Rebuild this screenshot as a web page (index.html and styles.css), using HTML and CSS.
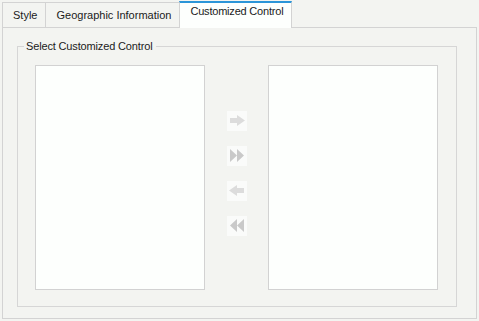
FILE: index.html
```html
<!DOCTYPE html>
<html lang="en">
<head>
  <meta charset="UTF-8" />
  <title>Customized Control</title>
  <link rel="stylesheet" href="styles.css">
</head>
<body>
  <div class="tabs">
    <div class="tab">Style</div>
    <div class="tab">Geographic Information</div>
    <div class="tab active">Customized Control</div>
  </div>

  <div class="panel">
    <fieldset class="group">
      <legend>Select Customized Control</legend>
      <div class="picker">
        <div class="list"></div>

        <div class="moves">
          <button class="move" title="Add">
            <svg viewBox="0 0 20 20" width="20" height="20">
              <rect x="3" y="7" width="7" height="5" fill="#dcdcdc"/>
              <polygon points="10,4 18,9.5 10,15" fill="#dcdcdc"/>
            </svg>
          </button>
          <button class="move" title="Add all">
            <svg viewBox="0 0 20 20" width="20" height="20">
              <polygon points="3,3 10,9.5 3,16" fill="#c9c9c9"/>
              <polygon points="10,3 17,9.5 10,16" fill="#c9c9c9"/>
            </svg>
          </button>
          <button class="move" title="Remove">
            <svg viewBox="0 0 20 20" width="20" height="20">
              <rect x="10" y="7" width="7" height="5" fill="#dcdcdc"/>
              <polygon points="10,4 2,9.5 10,15" fill="#dcdcdc"/>
            </svg>
          </button>
          <button class="move" title="Remove all">
            <svg viewBox="0 0 20 20" width="20" height="20">
              <polygon points="17,3 10,9.5 17,16" fill="#c9c9c9"/>
              <polygon points="10,3 3,9.5 10,16" fill="#c9c9c9"/>
            </svg>
          </button>
        </div>

        <div class="list"></div>
      </div>
    </fieldset>
  </div>
</body>
</html>
```

FILE: styles.css
```css
body {
  margin: 0;
  padding: 0 2px 2px 2px;
  height: 321px;
  box-sizing: border-box;
  display: flex;
  flex-direction: column;
  background: #f3f4f1;
  font-family: 'Liberation Sans', Arial, sans-serif;
  font-size: 11px;
  color: #1b1b1b;
  overflow: hidden;
}

.tabs {
  display: flex;
  align-items: flex-end;
  height: 27px;
}

.tab {
  height: 25px;
  box-sizing: border-box;
  padding: 6px 8px 0 10px;
  line-height: 13px;
  border: 1px solid #d3d3d3;
  border-right: none;
  border-bottom: none;
  white-space: nowrap;
}

.tab.active {
  position: relative;
  height: 27px;
  margin-bottom: -1px;
  padding-top: 2px;
  letter-spacing: -0.2px;
  background: #fdfffd;
  border-right: 1px solid #d3d3d3;
  border-top: 2px solid #2b95d8;
}

.panel {
  flex: 1;
  border: 1px solid #d3d3d3;
}

.group {
  margin: 12px 19px 0 14px;
  padding: 0;
  border: 1px solid #d6d6d6;
}

.group legend {
  margin-left: 6px;
  padding: 0 4px 0 2px;
  line-height: 13px;
  letter-spacing: -0.15px;
}

.picker {
  display: flex;
  padding: 12px 18px 16px 17px;
}

.list {
  width: 170px;
  height: 225px;
  box-sizing: border-box;
  border: 1px solid #d2d2d2;
  background: #fdfffd;
}

.moves {
  flex: 1;
  display: flex;
  flex-direction: column;
  align-items: center;
  gap: 15px;
  padding-top: 46px;
}

.move {
  width: 20px;
  height: 20px;
  padding: 0;
  border: none;
  background: #fafbfa;
}

.move svg {
  display: block;
}
```
